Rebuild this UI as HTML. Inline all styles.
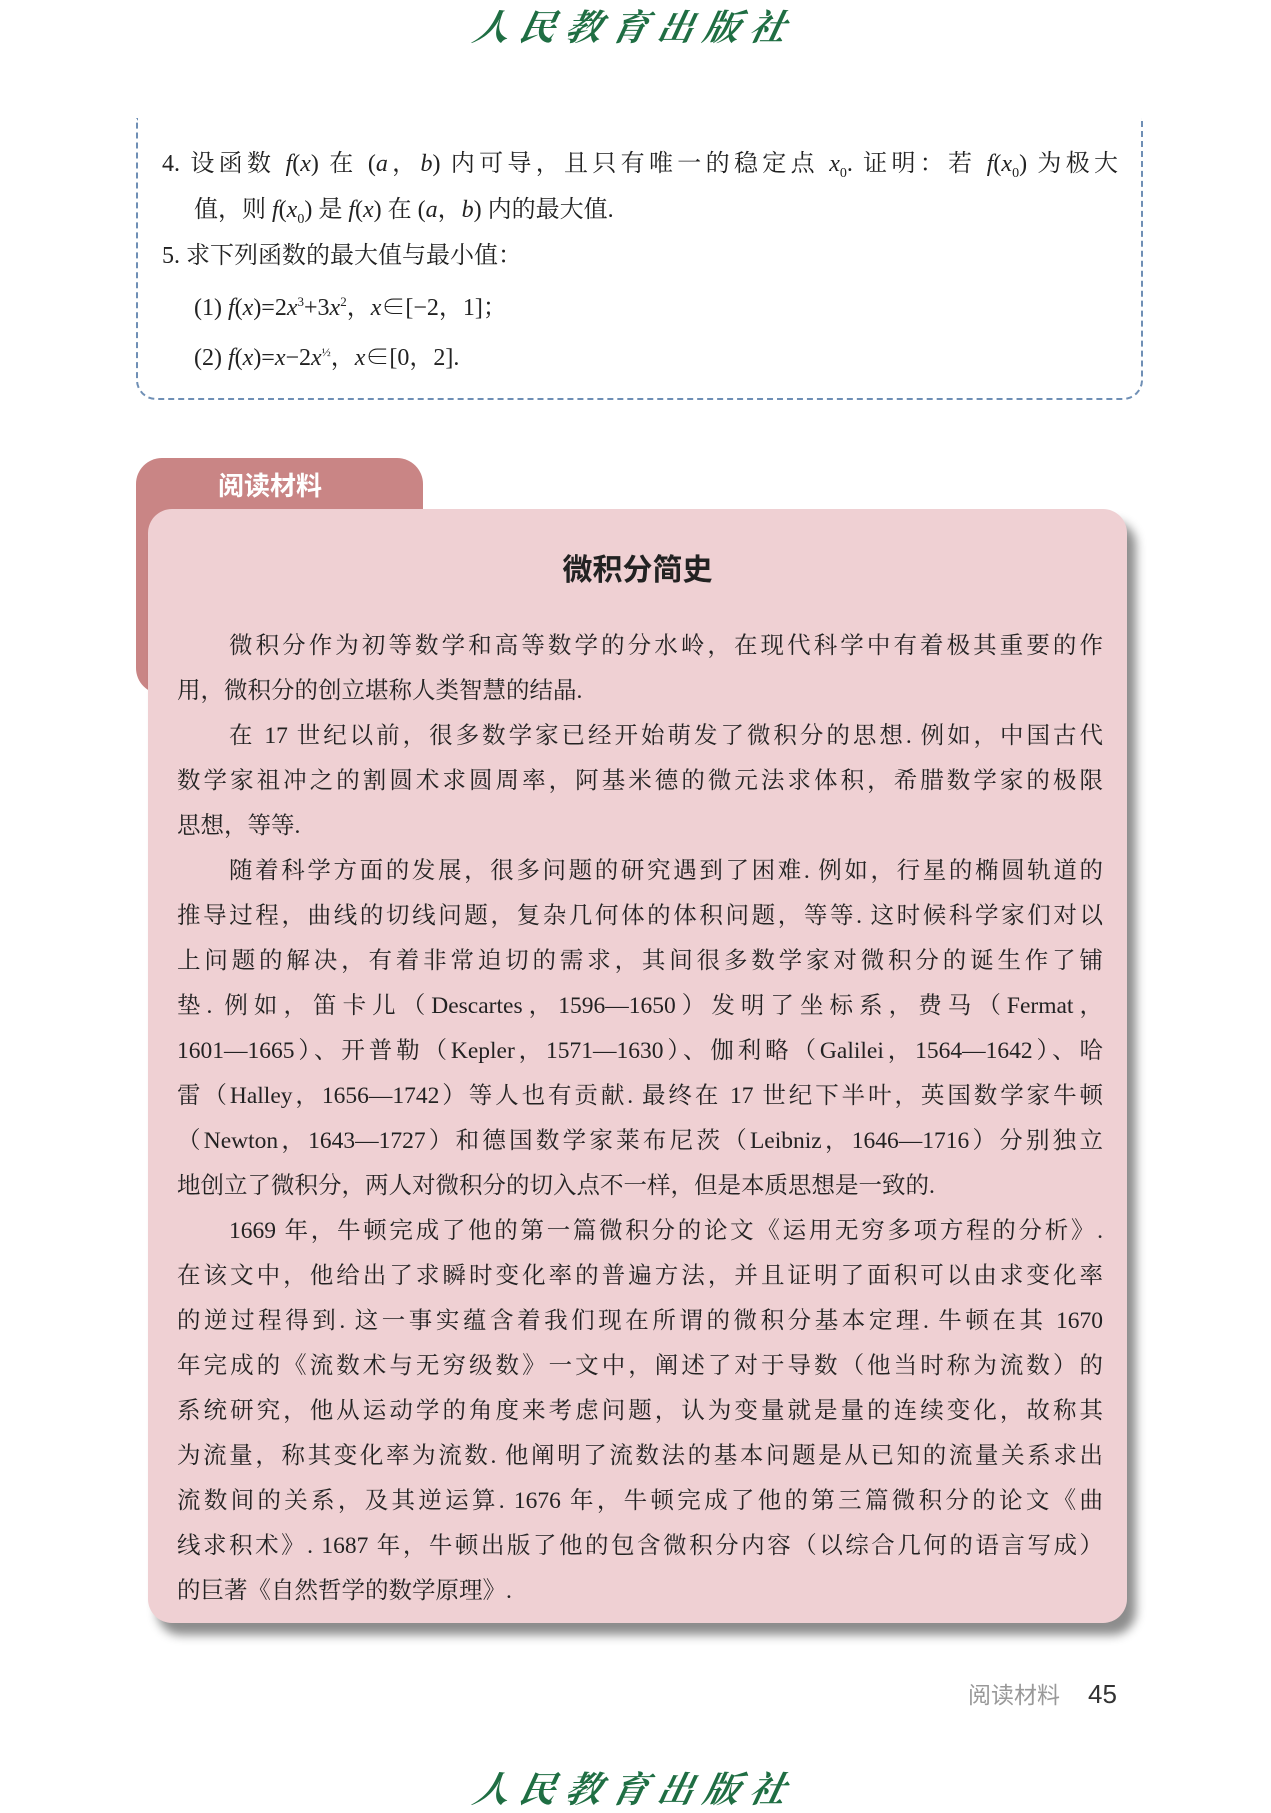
<!DOCTYPE html>
<html><head><meta charset="utf-8">
<style>
html,body{margin:0;padding:0;background:#fff;}
body{width:1271px;height:1800px;position:relative;overflow:hidden;font-family:"Liberation Serif","Noto Serif CJK SC",serif;color:#222;}
.logo{position:absolute;left:0;width:1271px;text-align:center;color:#1f6e43;font-family:"Noto Serif CJK SC",serif;font-style:italic;font-size:36px;font-weight:bold;letter-spacing:10px;transform:skewX(-12deg);}
.dash{position:absolute;left:136px;top:118px;width:1003px;height:280px;border:2px dashed #6f8fb5;border-top:none;border-radius:0 0 20px 20px;}
.ex{position:absolute;font-size:24px;line-height:46px;left:162px;top:141px;white-space:nowrap;font-family:"Liberation Serif","Noto Serif CJK SC",serif;}
.ex i{font-family:"Liberation Serif",serif;}
.ex div{height:46px;}
.ex .j{width:956px;text-align:justify;text-align-last:justify;}
.ind{padding-left:32px;}
.tab{position:absolute;left:136px;top:458px;width:287px;height:236px;background:#c98585;border-radius:26px 26px 0 26px;}
.tabt{position:absolute;left:136px;top:462px;width:287px;padding-left:82px;box-sizing:border-box;color:#fff;font-family:"Noto Sans CJK SC",sans-serif;font-weight:bold;font-size:26px;line-height:46px;}
.card{position:absolute;left:148px;top:509px;width:979px;height:1114px;background:#efd0d3;border-radius:24px;box-shadow:9px 12px 10px rgba(0,0,0,.45);}
.title{position:absolute;left:148px;width:979px;top:545px;text-align:center;font-family:"Noto Sans CJK SC",sans-serif;font-weight:bold;font-size:30px;line-height:44px;color:#222;}
.body{position:absolute;left:177px;top:624px;width:926px;font-size:23.5px;line-height:45px;font-family:"Liberation Serif","Noto Serif CJK SC",serif;}
.body div{height:45px;text-align:justify;text-align-last:justify;white-space:nowrap;overflow:visible;}
.body div.p{padding-left:52px;}
.body div.l{text-align-last:left;}
.foot{position:absolute;left:968px;top:1676px;font-family:"Noto Sans CJK SC",sans-serif;font-size:23px;color:#999;}
.foot b{font-weight:normal;color:#333;font-family:"Liberation Sans",sans-serif;font-size:26px;margin-left:28px;}
</style></head><body>
<div class="logo" style="top:0px;">人民教育出版社</div>
<div class="dash"></div>
<div class="ex">
<div class="j">4. 设函数 <i>f</i>(<i>x</i>) 在 (<i>a</i>，<i>b</i>) 内可导，且只有唯一的稳定点 <i>x</i><sub style="font-size:14px">0</sub>. 证明：若 <i>f</i>(<i>x</i><sub style="font-size:14px">0</sub>) 为极大</div>
<div class="ind">值，则 <i>f</i>(<i>x</i><sub style="font-size:14px">0</sub>) 是 <i>f</i>(<i>x</i>) 在 (<i>a</i>，<i>b</i>) 内的最大值.</div>
<div>5. 求下列函数的最大值与最小值：</div>
<div class="ind">(1) <i>f</i>(<i>x</i>)=2<i>x</i><sup style="font-size:13px">3</sup>+3<i>x</i><sup style="font-size:13px">2</sup>，<i>x</i>∈[−2，1]；</div>
<div class="ind" style="margin-top:4px">(2) <i>f</i>(<i>x</i>)=<i>x</i>−2<i>x</i><sup style="font-size:12px">½</sup>，<i>x</i>∈[0，2].</div>
</div>
<div class="tab"></div>
<div class="tabt">阅读材料</div>
<div class="card"></div>
<div class="title">微积分简史</div>
<div class="body">
<div class="p">微积分作为初等数学和高等数学的分水岭，在现代科学中有着极其重要的作</div>
<div class="l">用，微积分的创立堪称人类智慧的结晶.</div>
<div class="p">在 17 世纪以前，很多数学家已经开始萌发了微积分的思想. 例如，中国古代</div>
<div>数学家祖冲之的割圆术求圆周率，阿基米德的微元法求体积，希腊数学家的极限</div>
<div class="l">思想，等等.</div>
<div class="p">随着科学方面的发展，很多问题的研究遇到了困难. 例如，行星的椭圆轨道的</div>
<div>推导过程，曲线的切线问题，复杂几何体的体积问题，等等. 这时候科学家们对以</div>
<div>上问题的解决，有着非常迫切的需求，其间很多数学家对微积分的诞生作了铺</div>
<div>垫. 例如，笛卡儿（Descartes，1596—1650）发明了坐标系，费马（Fermat，</div>
<div>1601—1665）、开普勒（Kepler，1571—1630）、伽利略（Galilei，1564—1642）、哈</div>
<div>雷（Halley，1656—1742）等人也有贡献. 最终在 17 世纪下半叶，英国数学家牛顿</div>
<div>（Newton，1643—1727）和德国数学家莱布尼茨（Leibniz，1646—1716）分别独立</div>
<div class="l">地创立了微积分，两人对微积分的切入点不一样，但是本质思想是一致的.</div>
<div class="p">1669 年，牛顿完成了他的第一篇微积分的论文《运用无穷多项方程的分析》.</div>
<div>在该文中，他给出了求瞬时变化率的普遍方法，并且证明了面积可以由求变化率</div>
<div>的逆过程得到. 这一事实蕴含着我们现在所谓的微积分基本定理. 牛顿在其 1670</div>
<div>年完成的《流数术与无穷级数》一文中，阐述了对于导数（他当时称为流数）的</div>
<div>系统研究，他从运动学的角度来考虑问题，认为变量就是量的连续变化，故称其</div>
<div>为流量，称其变化率为流数. 他阐明了流数法的基本问题是从已知的流量关系求出</div>
<div>流数间的关系，及其逆运算. 1676 年，牛顿完成了他的第三篇微积分的论文《曲</div>
<div>线求积术》. 1687 年，牛顿出版了他的包含微积分内容（以综合几何的语言写成）</div>
<div class="l">的巨著《自然哲学的数学原理》.</div>
</div>
<div class="foot">阅读材料<b>45</b></div>
<div class="logo" style="top:1762px;">人民教育出版社</div>
</body></html>
